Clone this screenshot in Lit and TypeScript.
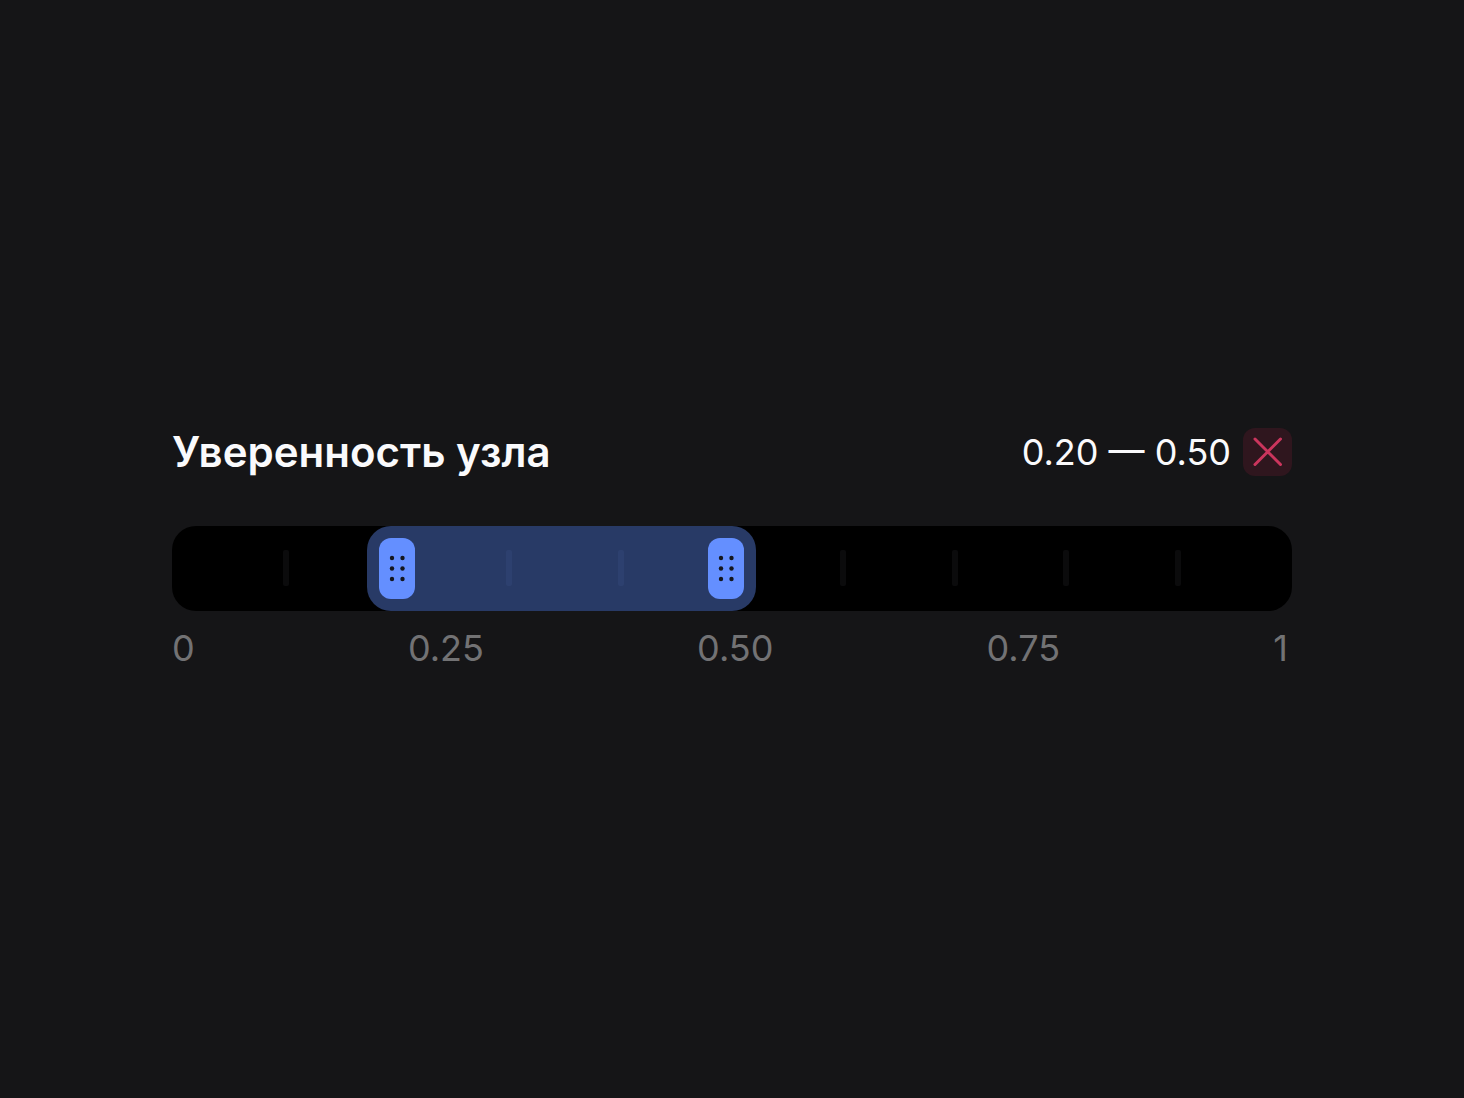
import { LitElement, html, css, svg } from "lit";
import { customElement, property, state } from "lit/decorators.js";
import { styleMap } from "lit/directives/style-map.js";

const EDGE = 3; // centre of the outermost tick
const CAP = 30; // range overhang beyond a handle's centre

@customElement("range-filter")
class RangeFilter extends LitElement {
  @property() label = "";
  @state() low = 0.199;
  @state() high = 0.495;

  static styles = css`
    :host {
      display: block;
      font-family: Inter, "Liberation Sans", sans-serif;
      color: #fafafc;
    }
    .header {
      display: flex;
      justify-content: space-between;
      align-items: center;
      height: 48px;
      margin-bottom: 50px;
    }
    .title {
      margin: 0;
      font-size: 42px;
      line-height: 48px;
      font-weight: 600;
    }
    .value {
      display: flex;
      align-items: center;
      gap: 12px;
      font-size: 36px;
      line-height: 48px;
    }
    .clear {
      display: grid;
      place-items: center;
      width: 49px;
      height: 48px;
      padding: 0;
      border: 0;
      border-radius: 12px;
      background: #2f161e;
      color: #cb355d;
      cursor: pointer;
    }
    .clear svg {
      display: block;
    }
    .track {
      position: relative;
      display: flex;
      justify-content: space-between;
      align-items: center;
      height: 85px;
      border-radius: 24px;
      background: #000;
    }
    .tick {
      width: 6px;
      height: 36px;
      border-radius: 2px;
      background: #0b0b0c;
    }
    .tick:first-child,
    .tick.last {
      visibility: hidden;
    }
    .tick.inside {
      z-index: 1;
      background: #2d406f;
    }
    .range {
      position: absolute;
      top: 0;
      bottom: 0;
      box-sizing: border-box;
      display: flex;
      justify-content: space-between;
      align-items: center;
      padding: 12px;
      border-radius: 24px;
      background: #283a66;
    }
    .handle {
      z-index: 2;
      width: 36px;
      height: 61px;
      border-radius: 12px;
      background: #648fff;
    }
    .handle svg {
      display: block;
    }
    .slider {
      position: absolute;
      z-index: 3;
      top: 0;
      left: -15px;
      width: calc(100% + 30px);
      height: 100%;
      margin: 0;
      opacity: 0;
      appearance: none;
      pointer-events: none;
    }
    .slider::-webkit-slider-thumb {
      appearance: none;
      width: 36px;
      height: 61px;
      pointer-events: auto;
      cursor: ew-resize;
    }
    .scale {
      display: flex;
      justify-content: space-between;
      margin-top: 14px;
      padding-right: 4px;
      font-size: 36px;
      line-height: 46px;
      color: #727274;
    }
  `;

  private at(value: number, extra: number) {
    return `calc(${value * 100}% + ${EDGE - 2 * EDGE * value + extra}px)`;
  }

  private setLow(e: Event) {
    this.low = Math.min(Number((e.target as HTMLInputElement).value), this.high);
  }

  private setHigh(e: Event) {
    this.high = Math.max(Number((e.target as HTMLInputElement).value), this.low);
  }

  private clear() {
    this.low = 0;
    this.high = 1;
  }

  private format(value: number) {
    return (Math.round(value * 100) / 100).toFixed(2);
  }

  private handle() {
    const dots = [20, 30.5, 41].flatMap((y) => [13, 23.5].map((x) => [x, y]));
    return html`<span class="handle">
      <svg width="36" height="61" viewBox="0 0 36 61" fill="#14161f" aria-hidden="true">
        ${dots.map(([x, y]) => svg`<circle cx=${x} cy=${y} r="2.2"></circle>`)}
      </svg>
    </span>`;
  }

  render() {
    const ticks = Array.from({ length: 11 }, (_, i) => i / 10);
    const range = {
      left: this.at(this.low, -CAP),
      right: this.at(1 - this.high, -CAP),
    };
    return html`
      <div class="header">
        <h2 class="title">${this.label}</h2>
        <div class="value">
          <output>${this.format(this.low)} — ${this.format(this.high)}</output>
          <button class="clear" type="button" aria-label="Сбросить" @click=${this.clear}>
            <svg width="30" height="30" viewBox="0 0 30 30" fill="none" stroke="currentColor"
              stroke-width="3" stroke-linecap="round" aria-hidden="true">
              <path d="M2 2 27.5 27.5M27.5 2 2 27.5"></path>
            </svg>
          </button>
        </div>
      </div>
      <div class="track">
        ${ticks.map((t) => {
          const inside = t > this.low + 0.02 && t < this.high - 0.02;
          return html`<span class="tick ${inside ? "inside" : ""} ${t === 1 ? "last" : ""}"></span>`;
        })}
        <div class="range" style=${styleMap(range)}>${this.handle()}${this.handle()}</div>
        <input class="slider" type="range" min="0" max="1" step="any" aria-label="Минимум"
          .value=${String(this.low)} @input=${this.setLow} />
        <input class="slider" type="range" min="0" max="1" step="any" aria-label="Максимум"
          .value=${String(this.high)} @input=${this.setHigh} />
      </div>
      <div class="scale">
        ${["0", "0.25", "0.50", "0.75", "1"].map((s) => html`<span>${s}</span>`)}
      </div>
    `;
  }
}

@customElement("app-root")
class AppRoot extends LitElement {
  static styles = css`
    :host {
      display: flex;
      align-items: center;
      box-sizing: border-box;
      min-height: 100vh;
      padding: 24px 172px;
      background: #151517;
    }
    .filter {
      flex: 1;
      min-width: 0;
    }
  `;

  render() {
    return html`<range-filter class="filter" label="Уверенность узла"></range-filter>`;
  }
}
